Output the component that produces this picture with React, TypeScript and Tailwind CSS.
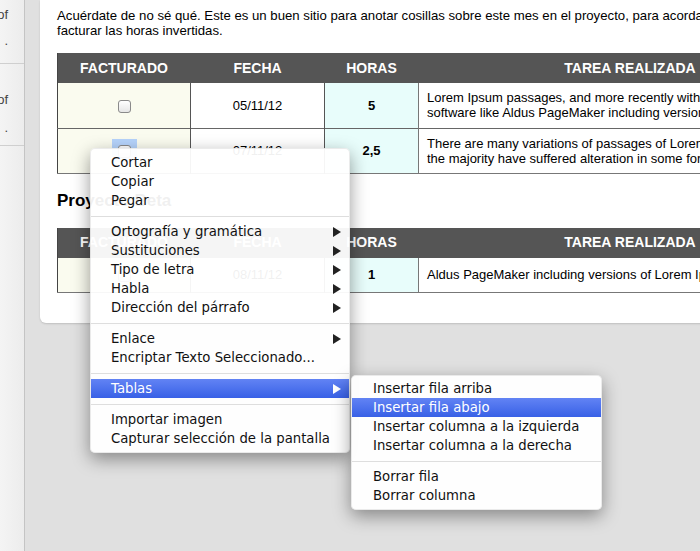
import React from "react";

const sans = { fontFamily: '"Liberation Sans", Arial, sans-serif' };
const menuFont = { fontFamily: '"DejaVu Sans", "Liberation Sans", sans-serif' };

const Arrow = ({ white = false }: { white?: boolean }) => (
  <svg width="8" height="10" viewBox="0 0 8 10" className="shrink-0">
    <polygon points="0,0 8,5 0,10" fill={white ? "#ffffff" : "#222222"} />
  </svg>
);

const Checkbox = () => (
  <span className="inline-block w-[13px] h-[13px] rounded-[3px] border border-[#8a8a8a] bg-gradient-to-b from-white to-[#e6e6e6] align-middle" />
);

type Item = { label?: string; sub?: boolean; active?: boolean; sep?: boolean };

const mainMenu: Item[] = [
  { label: "Cortar" },
  { label: "Copiar" },
  { label: "Pegar" },
  { sep: true },
  { label: "Ortografía y gramática", sub: true },
  { label: "Sustituciones", sub: true },
  { label: "Tipo de letra", sub: true },
  { label: "Habla", sub: true },
  { label: "Dirección del párrafo", sub: true },
  { sep: true },
  { label: "Enlace", sub: true },
  { label: "Encriptar Texto Seleccionado..." },
  { sep: true },
  { label: "Tablas", sub: true, active: true },
  { sep: true },
  { label: "Importar imagen" },
  { label: "Capturar selección de la pantalla" },
];

const subMenu: Item[] = [
  { label: "Insertar fila arriba" },
  { label: "Insertar fila abajo", active: true },
  { label: "Insertar columna a la izquierda" },
  { label: "Insertar columna a la derecha" },
  { sep: true },
  { label: "Borrar fila" },
  { label: "Borrar columna" },
];

const MenuList = ({ items, pl }: { items: Item[]; pl: string }) => (
  <>
    {items.map((it, i) =>
      it.sep ? (
        <div key={i} className="h-[12px] flex items-center">
          <div className="h-px w-full bg-[#dedede]" />
        </div>
      ) : (
        <div
          key={i}
          className={
            "h-[19px] flex items-center justify-between pr-[8px] text-[13.25px] " +
            pl +
            (it.active
              ? " bg-gradient-to-b from-[#6283f4] to-[#3860e6] text-white"
              : " text-[#111]")
          }
        >
          <span className="whitespace-nowrap">{it.label}</span>
          {it.sub && <Arrow white={it.active} />}
        </div>
      )
    )}
  </>
);

const Th = ({ children }: { children: React.ReactNode }) => (
  <th className="h-[30px] bg-[#555555] text-white font-bold text-[14px] text-center uppercase border-r border-[#555]">
    {children}
  </th>
);

const Cols = () => (
  <colgroup>
    <col className="w-[133px]" />
    <col className="w-[134px]" />
    <col className="w-[94px]" />
    <col />
  </colgroup>
);

const Head = () => (
  <thead>
    <tr>
      <Th>Facturado</Th>
      <Th>Fecha</Th>
      <Th>Horas</Th>
      <Th>Tarea realizada</Th>
    </tr>
  </thead>
);

export default function App() {
  return (
    <div className="relative w-[700px] h-[551px] overflow-hidden flex bg-[#e0e0e0]" style={sans}>
      {/* sidebar */}
      <div className="w-[25px] shrink-0 bg-gradient-to-r from-[#f4f4f4] to-[#ececec] border-r border-[#c4c4c4] text-[13px] text-[#444]">
        <div className="h-[64px] border-b border-[#cfcfcf] flex flex-col items-end pr-[16px]">
          <span className="mt-[6px] leading-[18px]">of</span>
          <span className="mt-[8px] leading-[18px]">.</span>
        </div>
        <div className="h-[82px] border-b border-[#cfcfcf] flex flex-col items-end pr-[16px]">
          <span className="mt-[27px] leading-[18px]">of</span>
          <span className="mt-[10px] leading-[18px]">.</span>
        </div>
      </div>

      {/* main */}
      <div className="flex-1 pl-[15px]">
        <div className="w-[820px] bg-white rounded-bl-[6px] shadow-[0_1px_2px_rgba(0,0,0,0.15)] pl-[17px] pt-[8px] pb-[30px]">
          <p className="text-[13.2px] leading-[15px] text-black whitespace-nowrap">
            Acuérdate de no sé qué. Este es un buen sitio para anotar cosillas sobre este mes en el proyecto, para acordarte de
            <br />
            facturar las horas invertidas.
          </p>

          <table className="mt-[15px] table-fixed border-collapse w-[785px] text-[13px] text-black border-l border-[#444]">
            <Cols />
            <Head />
            <tbody>
              <tr className="h-[45px] border-b border-[#666]">
                <td className="bg-[#fafbef] text-center border-r border-[#555]">
                  <Checkbox />
                </td>
                <td className="text-center border-r border-[#555]">05/11/12</td>
                <td className="bg-[#e8fdfb] text-center font-bold border-r border-[#777]">5</td>
                <td className="pl-[8px] leading-[15px] whitespace-nowrap">
                  Lorem Ipsum passages, and more recently with desktop publishing
                  <br />
                  software like Aldus PageMaker including versions of Lorem Ipsum.
                </td>
              </tr>
              <tr className="h-[45px] border-b border-[#777]">
                <td className="bg-[#fafbef] text-center border-r border-[#555]">
                  <span className="inline-block bg-[#b5d3fb] px-[6px] py-[2px]">
                    <Checkbox />
                  </span>
                </td>
                <td className="text-center border-r border-[#555]">07/11/12</td>
                <td className="bg-[#e8fdfb] text-center font-bold border-r border-[#777]">2,5</td>
                <td className="pl-[8px] leading-[15px] whitespace-nowrap">
                  There are many variations of passages of Lorem Ipsum available, but
                  <br />
                  the majority have suffered alteration in some form, by injected humour
                </td>
              </tr>
            </tbody>
          </table>

          <h2 className="mt-[17px] text-[17px] leading-[20px] font-bold text-black">Proyecto Beta</h2>

          <table className="mt-[17px] table-fixed border-collapse w-[785px] text-[13px] text-black border-l border-[#444]">
            <Cols />
            <Head />
            <tbody>
              <tr className="h-[35px] border-b border-[#777]">
                <td className="bg-[#fafbef] text-center border-r border-[#555]">
                  <Checkbox />
                </td>
                <td className="text-center border-r border-[#555]">08/11/12</td>
                <td className="bg-[#e8fdfb] text-center font-bold border-r border-[#777]">1</td>
                <td className="pl-[8px] whitespace-nowrap">
                  Aldus PageMaker including versions of Lorem Ipsum.
                </td>
              </tr>
            </tbody>
          </table>
        </div>
      </div>

      {/* context menu */}
      <div
        className="absolute left-[90px] top-[148px] w-[260px] py-[4px] rounded-[5px] bg-white/[0.94] shadow-[0_6px_18px_rgba(0,0,0,0.4)] border border-black/[0.08]"
        style={menuFont}
      >
        <MenuList items={mainMenu} pl="pl-[20px]" />
      </div>

      {/* submenu */}
      <div
        className="absolute left-[351px] top-[375px] w-[251px] pt-[3px] pb-[4px] rounded-[5px] bg-white/[0.96] shadow-[0_6px_18px_rgba(0,0,0,0.4)] border border-black/[0.08]"
        style={menuFont}
      >
        <MenuList items={subMenu} pl="pl-[21px]" />
      </div>
    </div>
  );
}
